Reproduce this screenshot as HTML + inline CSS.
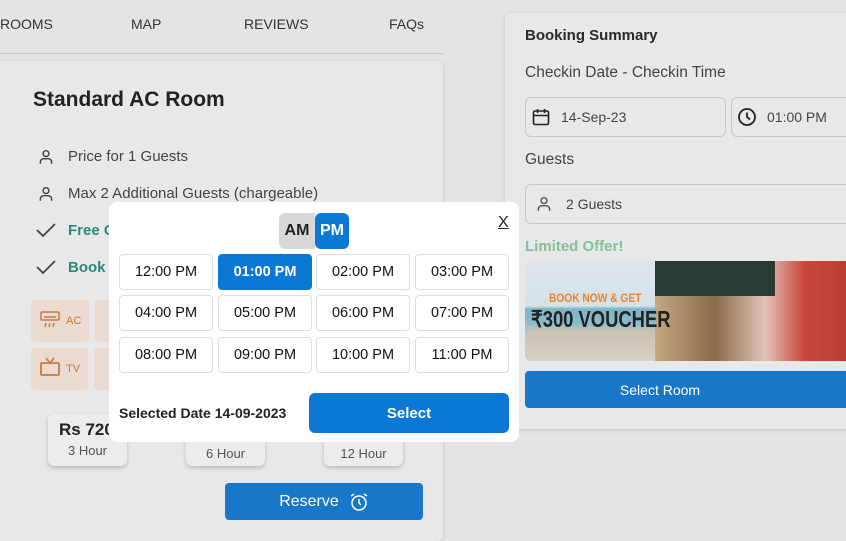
<!DOCTYPE html>
<html><head><meta charset="utf-8"><style>
*{box-sizing:border-box;margin:0;padding:0}
body{width:846px;height:528px;overflow:hidden;background:#e4e4e4;font-family:"Liberation Sans",sans-serif;color:#2a2a2a;position:relative}
.a{position:absolute}
.nav{font-size:14px;color:#333;top:16px}
.card{background:#e8e8e8;border-radius:6px;box-shadow:0 1px 4px rgba(0,0,0,.15)}
.li{font-size:15px;color:#444}
.am{background:#eadad0;border-radius:4px}
.tb{position:absolute;width:94px;height:36px;border:1px solid #ddd;border-radius:4px;background:#fff;font-size:14.5px;color:#111;display:flex;align-items:center;justify-content:center}
.inp{position:absolute;border:1px solid #c8c8c8;border-radius:6px;background:#e8e8e8;font-size:14px;color:#444;display:flex;align-items:center}
.pr{position:absolute;background:#ececec;border-radius:6px;box-shadow:0 2px 4px rgba(0,0,0,.2);font-size:13px;color:#555;text-align:center}
</style></head><body>
<div class="a nav" style="left:0">ROOMS</div>
<div class="a nav" style="left:131px">MAP</div>
<div class="a nav" style="left:244px">REVIEWS</div>
<div class="a nav" style="left:389px">FAQs</div>
<div class="a" style="left:0;top:53px;width:443px;height:1px;background:#c8c8c8"></div>

<div class="a card" style="left:-10px;top:61px;width:453px;height:480px"></div>
<div class="a" style="left:33px;top:88px;font-size:21px;font-weight:bold;color:#222">Standard AC Room</div>
<svg class="a" style="left:37px;top:148px" width="18" height="18" viewBox="0 0 16 16" fill="none" stroke="#444" stroke-width="1.3"><circle cx="8" cy="5" r="2.6"/><path d="M3 14v-1.5a3 3 0 0 1 3-3h4a3 3 0 0 1 3 3V14"/></svg>
<div class="a li" style="left:68px;top:148px">Price for 1 Guests</div>
<svg class="a" style="left:37px;top:185px" width="18" height="18" viewBox="0 0 16 16" fill="none" stroke="#444" stroke-width="1.3"><circle cx="8" cy="5" r="2.6"/><path d="M3 14v-1.5a3 3 0 0 1 3-3h4a3 3 0 0 1 3 3V14"/></svg>
<div class="a li" style="left:68px;top:185px">Max 2 Additional Guests (chargeable)</div>
<svg class="a" style="left:36px;top:222px" width="20" height="16" viewBox="0 0 20 16" fill="none" stroke="#444" stroke-width="1.8"><path d="M1 8l6 6L19 2"/></svg>
<div class="a" style="left:68px;top:222px;font-size:15px;font-weight:bold;color:#2a8a78">Free C</div>
<svg class="a" style="left:36px;top:259px" width="20" height="16" viewBox="0 0 20 16" fill="none" stroke="#444" stroke-width="1.8"><path d="M1 8l6 6L19 2"/></svg>
<div class="a" style="left:68px;top:259px;font-size:15px;font-weight:bold;color:#2a8a78">Book</div>
<div class="a am" style="left:31px;top:300px;width:58px;height:42px"></div>
<div class="a am" style="left:95px;top:300px;width:20px;height:42px"></div>
<div class="a am" style="left:31px;top:348px;width:57px;height:42px"></div>
<div class="a am" style="left:94px;top:348px;width:20px;height:42px"></div>
<svg class="a" style="left:40px;top:311px" width="20" height="18" viewBox="0 0 20 18" fill="none" stroke="#c77a45" stroke-width="1.5"><rect x="1" y="1" width="18" height="8" rx="1"/><path d="M4 6h12M6 12l-1 4M10 12l-1 4M14 12l-1 4"/></svg>
<div class="a" style="left:66px;top:315px;font-size:11px;color:#c77a45">AC</div>
<svg class="a" style="left:40px;top:357px" width="20" height="20" viewBox="0 0 20 20" fill="none" stroke="#c77a45" stroke-width="1.8"><rect x="1" y="6" width="18" height="12" rx="1"/><path d="M6 1l4 5 4-5"/></svg>
<div class="a" style="left:66px;top:363px;font-size:11px;color:#c77a45">TV</div>
<div class="pr" style="left:48px;top:414px;width:79px;height:52px"><div style="font-size:17px;font-weight:bold;color:#222;text-align:left;padding:6px 0 0 11px">Rs 720</div><div style="margin-top:3px">3 Hour</div></div>
<div class="pr" style="left:186px;top:414px;width:79px;height:52px"><div style="margin-top:32px">6 Hour</div></div>
<div class="pr" style="left:324px;top:414px;width:79px;height:52px"><div style="margin-top:32px">12 Hour</div></div>
<div class="a" style="left:225px;top:483px;width:198px;height:37px;background:#1877c9;border-radius:4px;color:#fff;font-size:16px;display:flex;align-items:center;justify-content:center;gap:10px">Reserve <svg width="20" height="20" viewBox="0 0 20 20" fill="none" stroke="#fff" stroke-width="1.5"><circle cx="10" cy="11" r="7"/><path d="M10 7v4l2 2M2 4l3-2M18 4l-3-2"/></svg></div>

<div class="a card" style="left:505px;top:13px;width:360px;height:416px"></div>
<div class="a" style="left:525px;top:27px;font-size:15px;font-weight:bold;color:#2a2a2a">Booking Summary</div>
<div class="a" style="left:525px;top:64px;font-size:15.5px;color:#444">Checkin Date - Checkin Time</div>
<div class="inp" style="left:525px;top:97px;width:201px;height:40px;padding-left:35px">14-Sep-23</div>
<svg class="a" style="left:532px;top:108px" width="18" height="18" viewBox="0 0 18 18" fill="none" stroke="#222" stroke-width="1.6"><rect x="1.5" y="3" width="15" height="13.5" rx="1.5"/><path d="M1.5 7.5h15M5.5 1v4M12.5 1v4"/></svg>
<div class="inp" style="left:731px;top:97px;width:130px;height:40px;padding-left:35px">01:00 PM</div>
<svg class="a" style="left:737px;top:107px" width="20" height="20" viewBox="0 0 20 20" fill="none" stroke="#222" stroke-width="1.8"><circle cx="10" cy="10" r="8"/><path d="M10 5.5V10l3 2.5"/></svg>
<div class="a" style="left:525px;top:151px;font-size:15.5px;color:#444">Guests</div>
<div class="inp" style="left:525px;top:184px;width:340px;height:40px;padding-left:40px">2 Guests</div>
<svg class="a" style="left:535px;top:195px" width="18" height="18" viewBox="0 0 16 16" fill="none" stroke="#555" stroke-width="1.3"><circle cx="8" cy="5" r="2.6"/><path d="M3 14v-1.5a3 3 0 0 1 3-3h4a3 3 0 0 1 3 3V14"/></svg>
<div class="a" style="left:525px;top:238px;font-size:15px;font-weight:bold;color:#86c09a">Limited Offer!</div>
<div class="a" style="left:525px;top:261px;width:330px;height:100px;border-radius:6px;overflow:hidden;background:linear-gradient(#dde6ea 0%,#d5e2e8 45%,#7eb4c4 48%,#8abccc 62%,#c9c2b4 70%,#d6cfc3 100%)">
<div class="a" style="left:130px;top:0;width:200px;height:100px;background:linear-gradient(90deg,#c4a880,#8a6a4a 30%,#e0c4b8 55%,#c8463a 75%,#b43c30)"></div>
<div class="a" style="left:130px;top:0;width:120px;height:35px;background:#2a3a36"></div>
<div class="a" style="left:24px;top:30px;font-size:12px;font-weight:bold;color:#e8852c;transform:scaleX(.85);transform-origin:left">BOOK NOW &amp; GET</div>
<div class="a" style="left:6px;top:45px;font-size:23px;font-weight:bold;color:#222;transform:scaleX(.8);transform-origin:left">₹300 VOUCHER</div>
</div>
<div class="a" style="left:525px;top:371px;width:340px;height:37px;background:#1877c9;border-radius:4px;color:#fff;font-size:14px;display:flex;align-items:center;justify-content:center;padding-right:70px">Select Room</div>

<div class="a" style="left:109px;top:202px;width:410px;height:240px;background:#fff;border-radius:8px"></div>
<div class="a" style="left:279px;top:213px;width:36px;height:36px;background:#d8d8d8;border-radius:6px 0 0 6px;font-size:16px;font-weight:bold;display:flex;align-items:center;justify-content:center;color:#222">AM</div>
<div class="a" style="left:315px;top:213px;width:34px;height:36px;background:#0a78d4;border-radius:6px;font-size:16px;font-weight:bold;display:flex;align-items:center;justify-content:center;color:#fff">PM</div>
<div class="a" style="left:498px;top:214px;font-size:16px;color:#222;text-decoration:underline">X</div>
<div class="tb" style="left:119px;top:254px">12:00 PM</div>
<div class="tb" style="left:218px;top:254px;background:#0a78d4;color:#fff;border-color:#0a78d4;font-weight:bold">01:00 PM</div>
<div class="tb" style="left:316px;top:254px">02:00 PM</div>
<div class="tb" style="left:415px;top:254px">03:00 PM</div>
<div class="tb" style="left:119px;top:295px">04:00 PM</div>
<div class="tb" style="left:218px;top:295px">05:00 PM</div>
<div class="tb" style="left:316px;top:295px">06:00 PM</div>
<div class="tb" style="left:415px;top:295px">07:00 PM</div>
<div class="tb" style="left:119px;top:337px">08:00 PM</div>
<div class="tb" style="left:218px;top:337px">09:00 PM</div>
<div class="tb" style="left:316px;top:337px">10:00 PM</div>
<div class="tb" style="left:415px;top:337px">11:00 PM</div>
<div class="a" style="left:119px;top:405px;font-size:14px;font-weight:bold;color:#222">Selected Date 14-09-2023</div>
<div class="a" style="left:309px;top:393px;width:200px;height:40px;background:#0a78d4;border-radius:6px;color:#fff;font-size:15px;font-weight:bold;display:flex;align-items:center;justify-content:center">Select</div>
</body></html>
